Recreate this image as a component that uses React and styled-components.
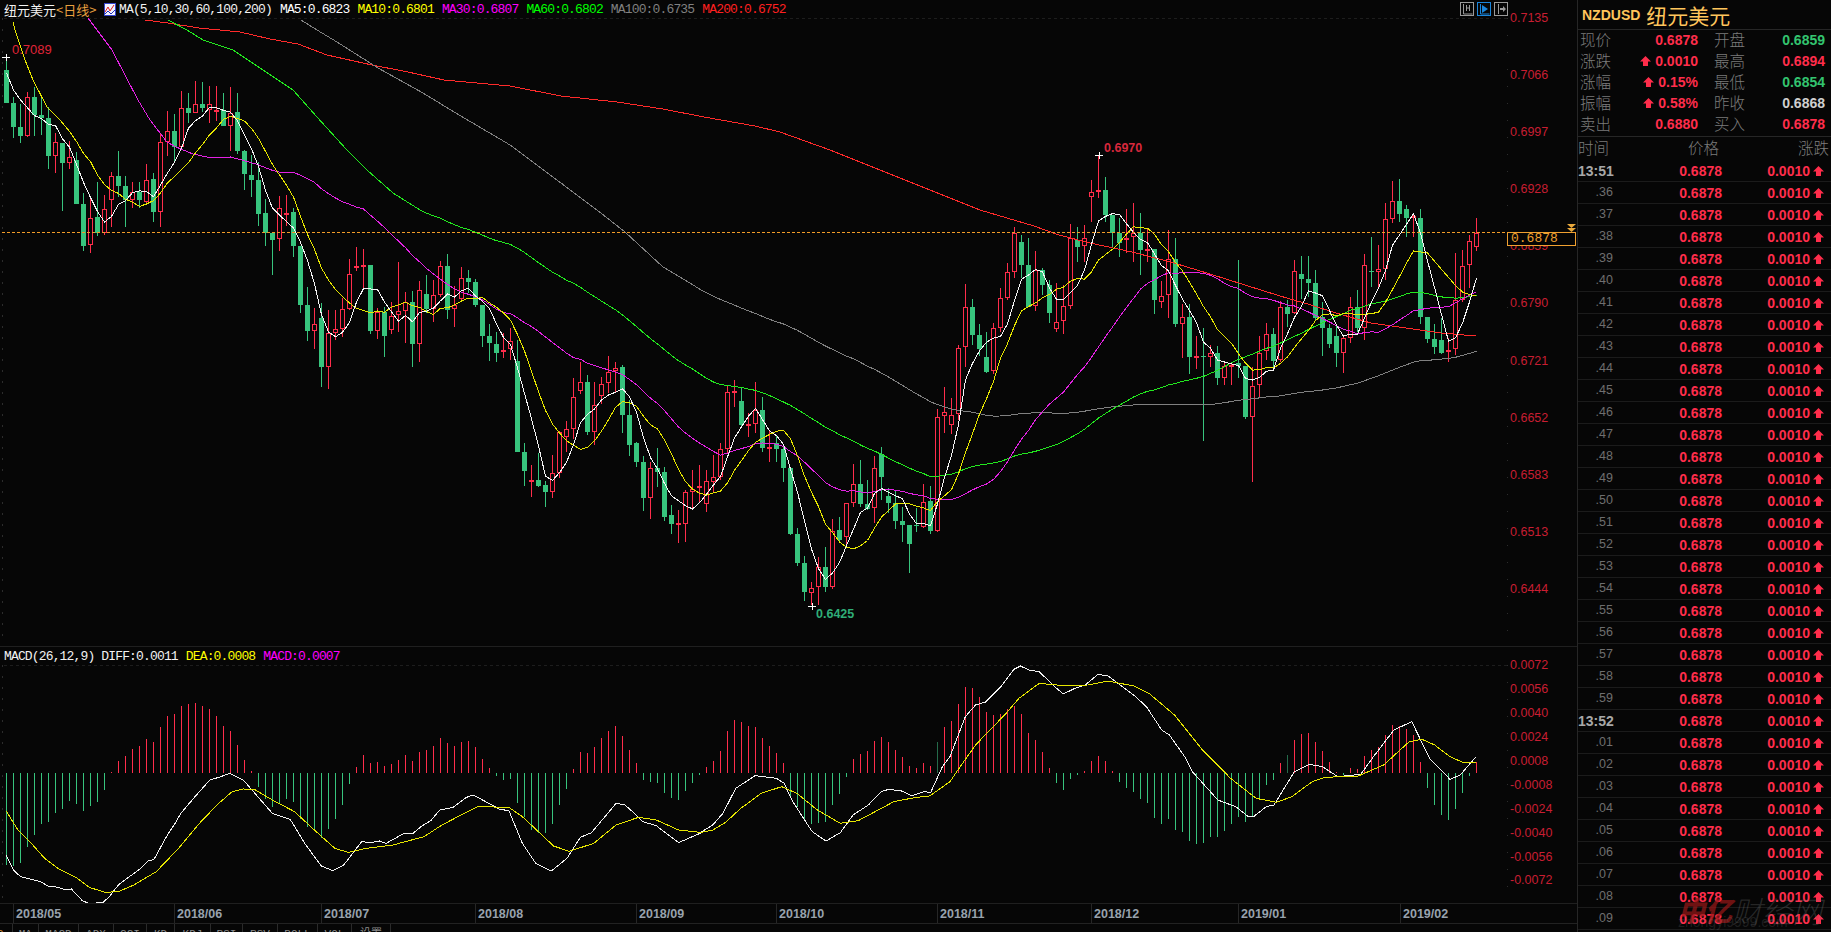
import React from 'react';
import styled, { createGlobalStyle } from 'styled-components';

const BG = '#060606';
const RED = '#ff2d4b';
const GREEN = '#37c47d';
const MONO = '"Liberation Mono", "Noto Sans CJK SC", monospace';
const SANS = '"Liberation Sans", "Noto Sans CJK SC", sans-serif';

// candles read off the chart: [color, bodyTop, bodyBottom, high, low]
// each block has its own y offset, everything is 3x the pixel value
const block1 = [
  ['g',120,218,85,218],['g',219,291,200,323],['g',291,318,222,338],['r',202,318,187,320],['g',201,255,172,318],
  ['g',255,264,200,315],['g',264,378,232,416],['r',337,378,310,428],['g',339,399,339,542],['r',382,398,334,417],
  ['g',390,522,366,522],['g',522,648,490,662],['r',565,646,506,670],['g',561,608,457,618],['r',538,608,495,615],
  ['r',439,509,427,590],['g',439,468,363,500],['g',468,510,437,590],['r',487,510,457,533],['g',485,510,455,533],
  ['r',451,516,403,518],['g',447,545,430,575],['r',337,545,310,590],['r',304,335,243,378],['g',304,350,252,395],
  ['r',235,352,183,360],['g',234,248,190,280],['r',223,248,153,250],['g',223,234,157,245],['r',221,240,168,278],
  ['r',240,244,168,272],['g',240,287,190,288],['r',248,287,172,362],['g',246,362,190,372],['g',363,431,360,480],
  ['g',435,450,375,500],['g',450,551,395,587],['g',549,608,507,648],['g',608,630,608,735],['r',535,628,498,662],
  ['r',548,556,495,587],['g',546,648,535,680],['g',648,825,648,850],['g',825,903,770,932],['r',883,902,835,956],
  ['g',864,1010,818,1070],['r',910,1010,840,1078],['r',898,908,840,930],['r',838,896,805,920],['r',733,836,687,840],
  ['r',709,713,652,722],['r',706,710,657,775],['g',705,903,705,912],['r',845,902,835,927],['g',845,918,830,980],
  ['r',858,899,815,912],['r',844,856,696,905],['r',815,842,785,940],['g',816,941,783,1010],['r',781,941,752,995],
  ['g',792,838,735,850],['r',795,836,750,876],['r',709,795,693,800],['g',708,840,672,868],['r',826,838,768,890],
  ['r',745,808,712,815],['g',744,755,720,790],['g',756,825,748,830],['g',825,918,825,950],['g',918,938,882,992],
  ['g',942,968,905,995],
];
const block2 = [
  ['r',211,217,160,233],['r',184,208,144,240],['g',243,516,180,516],['g',516,573,490,617],['r',601,607,555,650],
  ['g',600,618,518,622],['g',615,636,603,680],['r',580,635,525,653],['r',455,578,452,593],['r',448,470,423,515],
  ['r',352,446,293,478],['r',307,332,245,342],['g',306,456,285,466],['r',375,455,306,495],['r',313,347,292,372],
  ['r',277,310,228,340],['r',263,274,245,335],['g',261,404,255,458],['g',405,495,360,528],['g',489,546,487,560],
  ['g',546,654,528,692],['r',565,653,545,716],['g',564,575,505,620],['g',576,711,560,722],['g',705,732,675,762],
  ['r',730,734,690,788],['r',637,731,630,785],['r',628,635,570,685],['r',619,625,555,670],['r',604,673,570,695],
  ['r',592,606,525,640],['r',508,590,490,600],['r',337,506,315,520],['r',332,335,300,380],['g',363,436,325,440],
  ['r',433,436,400,470],['r',390,431,307,460],['g',390,504,352,515],['r',502,504,450,545],['g',490,507,465,545],
  ['g',507,564,495,605],['g',564,762,564,765],['g',762,850,745,857],['g',850,935,828,962],['r',925,938,905,975],
  ['r',860,922,830,975],['g',861,921,800,935],['r',752,920,717,927],['g',750,780,712,790],['r',670,772,670,800],
  ['r',613,668,552,680],['g',612,672,540,682],['g',672,686,600,690],['r',565,685,528,730],['g',522,590,502,660],
  ['g',648,668,625,700],['g',670,723,630,747],['g',723,735,680,785],['g',736,792,735,878],['g',735,738,683,757],
  ['r',665,740,613,745],['g',664,752,618,762],['r',412,752,388,755],['r',397,409,322,458],
];
const block3 = [
  ['r',855,885,805,912],['r',655,853,645,870],['r',532,652,462,712],['g',532,614,507,645],['g',615,657,583,677],
  ['g',682,725,605,730],['r',595,724,578,732],['r',505,593,475,607],['r',427,503,398,510],['r',310,425,292,445],
  ['g',336,405,315,445],['g',405,530,325,530],['r',420,529,363,543],['g',420,464,415,495],['g',464,549,450,580],
  ['r',577,596,460,605],['r',529,574,465,612],['r',325,527,282,537],['g',330,351,292,395],['r',325,349,285,395],
  ['r',187,200,150,277],['r',181,185,75,205],['g',180,255,140,275],['g',255,308,255,355],['g',308,340,265,382],
  ['r',323,326,237,368],['r',308,322,220,395],['g',308,360,250,435],['r',358,360,295,395],['g',358,510,358,552],
  ['r',497,515,453,535],['r',388,494,300,565],['g',388,582,325,592],['r',562,581,523,683],['g',561,680,522,732],
  ['r',679,685,618,717],['g',678,681,595,932],['r',670,680,645,710],['g',670,744,648,765],['r',708,743,695,765],
  ['r',704,712,695,765],['g',700,708,390,745],['g',708,860,708,866],['r',768,860,710,1055],['r',670,766,617,803],
  ['r',613,664,580,690],['g',613,692,595,712],['r',532,690,512,695],['g',530,552,510,590],['r',423,550,390,552],
  ['g',432,447,378,508],['g',447,458,378,500],['g',459,565,420,570],['g',560,593,515,678],['g',595,642,582,655],
  ['g',618,668,588,710],['r',625,668,620,728],['r',532,623,502,640],['g',530,595,480,605],['r',405,593,372,630],
  ['g',423,426,320,470],['r',418,425,345,470],['r',268,416,220,450],['r',214,266,153,280],['g',213,252,148,275],
  ['g',237,264,225,322],['r',258,262,253,320],['g',264,560,238,582],['g',561,627,560,640],['g',628,650,582,672],
  ['g',630,668,565,672],['r',661,667,625,695],['r',511,658,370,675],['r',408,510,360,515],['r',334,406,315,475],
  ['r',310,352,265,363],
];

const toCandles = (rows, offset) =>
  rows.map(([c, top, bottom, high, low]) => ({
    up: c === 'r',
    top: Math.round(offset + top / 3),
    bottom: Math.round(offset + bottom / 3),
    high: Math.round(offset + high / 3),
    low: Math.round(offset + low / 3),
  }));

const candles = [...toCandles(block1, 30), ...toCandles(block2, 280), ...toCandles(block3, 130)];
const closes = candles.map((c) => (c.up ? c.top : c.bottom));

const column = (i) => 6 + 7 * i;

const movingAverage = (n, head) => {
  const points = [...head];
  for (let i = n - 1; i < closes.length; i++) {
    const slice = closes.slice(i - n + 1, i + 1);
    points.push([column(i) + 0.5, slice.reduce((a, b) => a + b, 0) / n]);
  }
  return points.map((p) => p.join(',')).join(' ');
};

const toLine = (points) => points.map((p) => p.join(',')).join(' ');

// the part of each average that starts before the visible candles
const ma5 = movingAverage(5, [[6.5, 73], [13.5, 90], [20.5, 100]]);
const ma10 = movingAverage(10, [[13, 22], [15, 30], [25, 60], [33, 80], [47, 107], [60, 120]]);
const ma30 = movingAverage(30, [[88, 18], [97, 30], [112, 50], [125, 75], [138, 100], [150, 120], [167, 142], [176, 147], [193, 154]]);
const ma60 = movingAverage(60, [[168, 20], [187, 30], [203, 40], [233, 50], [260, 68], [293, 90], [317, 117], [347, 150], [367, 170], [393, 193]]);
const ma100 = movingAverage(100, [[301, 20], [317, 30], [337, 42], [378, 68], [423, 93], [459, 115], [500, 139], [510, 145], [561, 183], [597, 210], [625, 232], [663, 267], [685, 280]]);
const ma200 = toLine([
  [145, 20], [168, 23], [199, 28], [240, 32], [270, 39], [298, 44], [327, 55], [372, 65], [408, 72], [444, 80], [510, 86],
  [561, 96], [617, 102], [663, 109], [704, 117], [755, 126], [780, 132], [830, 150], [880, 170], [930, 190], [980, 210],
  [1034, 226], [1059, 235], [1090, 243], [1132, 252], [1174, 263], [1210, 274], [1245, 285], [1280, 296], [1311, 305],
  [1336, 313], [1371, 323], [1406, 328], [1441, 333], [1476, 336],
]);

// macd bars, tip of each bar, 3x above the zero line
const tips1 = [
  555,558,548,500,465,432,426,398,386,363,372,392,378,365,330,276,243,228,207,198,177,186,140,108,102,78,72,69,78,87,
  108,138,153,195,240,273,320,357,380,368,357,365,418,440,450,473,447,417,375,312,260,225,249,246,258,251,240,225,243,216,
  210,198,174,189,198,186,183,201,237,264,288,300,297,370,410,450,460,458,432,375,327,266,216,219,201,174,153,138,168,210,
  249,300,306,309,339,354,360,333,309,285,
];
const tips2 = [
  352,334,303,243,210,216,228,232,264,288,309,339,445,470,510,522,520,515,465,432,380,327,312,303,273,261,276,300,321,348,
  354,339,348,277,231,213,162,111,114,141,186,195,192,177,168,192,249,270,306,354,399,420,387,375,363,333,318,333,363,396,
  414,426,447,459,504,522,507,540,546,573,582,579,561,561,543,522,501,516,498,450,405,390,339,315,270,252,249,276,303,336,
  366,376,354,357,318,300,291,255,225,228,237,255,336,414,465,495,510,477,430,378,336,
];
const bars = [
  ...tips1.map((t) => 680 + t / 3),
  ...tips2.map((t) => 650 + t / 3),
].map((y, i) => ({ i, tip: Math.round(y), dim: i === 133 || i === 183 }));

const fromCrop8 = (points) => points.map(([x, y]) => [x / 2.24, 680 + y / 3]);
const fromCrop9 = (points) => points.map(([x, y]) => [700 + x / 1.96, 650 + y / 3]);

const diff = toLine([
  ...fromCrop8([[14,525],[30,570],[46,590],[90,605],[108,618],[130,622],[148,630],[160,627],[185,663],[200,670],[230,668],[245,650],[265,615],[315,565],[332,543],[345,538],[375,465],[390,435],[405,400],[440,345],[470,300],[490,292],[515,280],[545,300],[610,400],[650,418],[685,495],[720,558],[745,572],[770,555],[810,485],[830,488],[850,483],[865,490],[905,460],[925,460],[945,438],[965,422],[985,390],[1015,382],[1045,352],[1060,345],[1120,388],[1140,392],[1170,490],[1200,550],[1235,573],[1270,535],[1300,472],[1325,458],[1380,370],[1400,375],[1425,405],[1440,425],[1470,437],[1520,488],[1568,460]]),
  ...fromCrop9([[0,548],[25,525],[45,490],[70,415],[85,400],[108,377],[150,385],[165,400],[180,450],[205,510],[220,545],[247,573],[275,548],[300,495],[330,465],[355,425],[370,418],[395,423],[415,437],[440,425],[452,428],[475,350],[490,320],[520,200],[540,165],[560,156],[590,110],[615,58],[628,48],[645,60],[665,65],[695,110],[712,132],[735,115],[755,105],[780,73],[800,78],[850,135],[875,170],[905,240],[920,255],[950,320],[965,365],[1015,450],[1050,470],[1075,500],[1085,500],[1110,470],[1125,465],[1165,365],[1195,343],[1220,350],[1250,380],[1295,373],[1320,320],[1360,240],[1395,215],[1430,325],[1470,388],[1490,375],[1520,322]]),
]);
const dea = toLine([
  ...fromCrop8([[14,393],[40,450],[70,490],[100,535],[130,565],[170,592],[200,622],[235,637],[265,635],[300,615],[350,575],[400,505],[450,425],[490,370],[520,335],[545,327],[570,328],[610,360],[660,395],[700,445],[750,505],[780,517],[820,505],[880,495],[950,470],[990,435],[1040,400],[1070,380],[1140,382],[1170,410],[1210,460],[1240,498],[1275,514],[1330,490],[1380,435],[1430,412],[1470,420],[1520,450],[1568,457]]),
  ...fromCrop9([[0,548],[25,540],[50,517],[80,475],[120,430],[160,410],[190,430],[230,480],[275,520],[310,512],[380,455],[420,443],[450,438],[490,395],[510,350],[540,285],[600,190],[625,145],[665,100],[720,108],[760,105],[800,93],[850,108],[880,130],[930,195],[985,300],[1040,385],[1090,445],[1130,457],[1160,440],[1200,395],[1225,382],[1290,378],[1340,345],[1390,275],[1415,268],[1440,285],[1470,320],[1495,337],[1520,338]]),
]);

const priceLabels = ['0.7135', '0.7066', '0.6997', '0.6928', '0.6859', '0.6790', '0.6721', '0.6652', '0.6583', '0.6513', '0.6444'];
const macdLabels = ['0.0072', '0.0056', '0.0040', '0.0024', '0.0008', '-0.0008', '-0.0024', '-0.0040', '-0.0056', '-0.0072'];
const legend = [
  ['MA5:0.6823', '#ffffff'],
  ['MA10:0.6801', '#ffff00'],
  ['MA30:0.6807', '#ff00ff'],
  ['MA60:0.6802', '#00ff00'],
  ['MA100:0.6735', '#808080'],
  ['MA200:0.6752', '#ff2020'],
];
const months = [
  ['2018/05', 161], ['2018/06', 147], ['2018/07', 154], ['2018/08', 161], ['2018/09', 140],
  ['2018/10', 161], ['2018/11', 154], ['2018/12', 147], ['2019/01', 162], ['2019/02', 177],
];
const tabs = [['MA', 26.5], ['MACD', 40], ['ADX', 35], ['CCI', 33], ['KD', 28], ['KDJ', 36], ['RSI', 32], ['RSV', 35], ['BOLL', 40], ['VOL', 34], ['设置', 39]];
const quotes = [
  ['现价', '0.6878', RED, false, '开盘', '0.6859', '#33c46f'],
  ['涨跌', '0.0010', RED, true, '最高', '0.6894', RED],
  ['涨幅', '0.15%', RED, true, '最低', '0.6854', '#33c46f'],
  ['振幅', '0.58%', RED, true, '昨收', '0.6868', '#cfcfcf'],
  ['卖出', '0.6880', RED, false, '买入', '0.6878', RED],
];
const seconds = (from, to) => Array.from({ length: to - from + 1 }, (_, i) => `.${String(from + i).padStart(2, '0')}`);
const ticks = ['13:51', ...seconds(36, 59), '13:52', ...seconds(1, 9)];

const GlobalStyle = createGlobalStyle`
  html, body {
    margin: 0;
    height: 100%;
    background: ${BG};
    overflow: hidden;
  }
`;

const Page = styled.div`
  display: flex;
  width: 1831px;
  height: 932px;
  overflow: hidden;
  background: ${BG};
  font-family: ${SANS};
`;

const ChartColumn = styled.div`
  display: flex;
  flex-direction: column;
  width: 1577px;
  flex-shrink: 0;
`;

const Pane = styled.div`
  position: relative;
  display: flex;
  height: ${({ $height }) => $height}px;
  flex-shrink: 0;
  border-bottom: 1px solid #1f1f1f;
  box-sizing: border-box;
`;

const PlotSvg = styled.svg`
  display: block;
  width: 1508px;
  height: 100%;
  flex-shrink: 0;
`;

const Axis = styled.div`
  position: relative;
  flex: 1;
  display: flex;
  flex-direction: column;
  gap: ${({ $gap }) => $gap}px;
  padding: ${({ $top }) => $top}px 0 0 2px;
`;

const AxisLabel = styled.div`
  height: 14px;
  line-height: 14px;
  font-size: 12.5px;
  color: #c81e32;
`;

const Legend = styled.div`
  position: absolute;
  left: 4px;
  top: ${({ $top }) => $top}px;
  display: flex;
  align-items: center;
  gap: 8px;
  height: 14px;
  white-space: nowrap;
  font-family: ${MONO};
  font-size: 13px;
  letter-spacing: -0.85px;
`;

const LegendItem = styled.span`
  color: ${({ $color }) => $color};
`;

const SymbolTitle = styled.span`
  display: inline-flex;
  align-items: center;
  width: 92px;
  font-family: "Noto Sans CJK SC", sans-serif;
  font-size: 13px;
  letter-spacing: 0;
  color: #f2f2f2;
`;

const Period = styled.span`
  color: #e8a040;
`;

const MaIcon = styled.svg`
  width: 12px;
  height: 13px;
  margin-right: -5px;
  flex-shrink: 0;
`;

const ToolIcons = styled.div`
  position: absolute;
  left: 1460px;
  top: 2px;
  display: flex;
  gap: 3px;
`;

const ToolIcon = styled.svg`
  width: 14px;
  height: 14px;
  color: ${({ $active }) => ($active ? '#1b86dc' : '#9a9a9a')};
`;

const LastPrice = styled.div`
  position: absolute;
  left: -1px;
  top: 232px;
  width: 64px;
  height: 12px;
  line-height: 12px;
  padding-left: 3px;
  border: 1px solid #f0a030;
  background: #050505;
  color: #f0a030;
  font-family: ${MONO};
  font-size: 13px;
`;

const LastMarker = styled.svg`
  position: absolute;
  left: 59px;
  top: 224px;
  width: 9px;
  height: 8px;
`;

const DateBar = styled.div`
  display: flex;
  height: 20px;
  flex-shrink: 0;
  padding-left: 13px;
  border-bottom: 1px solid #222;
  box-sizing: border-box;
`;

const DateCell = styled.div`
  width: ${({ $width }) => $width}px;
  flex-shrink: 0;
  box-sizing: border-box;
  padding-left: 2px;
  border-left: 1px solid #262626;
  font-size: 12.5px;
  font-weight: bold;
  line-height: 20px;
  color: #98a2ad;
`;

const TabBar = styled.div`
  display: flex;
  flex: 1;
  overflow: hidden;
`;

const Tab = styled.div`
  width: ${({ $width }) => $width}px;
  flex-shrink: 0;
  box-sizing: border-box;
  text-align: center;
  border-right: 1px solid #2a2a2a;
  font-family: ${MONO};
  font-size: 11px;
  line-height: 20px;
  color: #8c8c8c;
`;

const LeadTab = styled.div`
  width: 12.5px;
  flex-shrink: 0;
  box-sizing: border-box;
  border-right: 1px solid #2a2a2a;
  overflow: hidden;
  text-indent: -4px;
  font-size: 11px;
  line-height: 20px;
  color: #e8a040;
`;

const SidePanel = styled.div`
  position: relative;
  flex: 1;
  display: flex;
  flex-direction: column;
  border-left: 1px solid #262626;
`;

const SideHeader = styled.div`
  display: flex;
  align-items: center;
  gap: 6px;
  height: 29px;
  padding-left: 4px;
  border-bottom: 1px solid #262626;
  color: #ffc55c;
`;

const SymbolCode = styled.span`
  font-size: 14px;
  font-weight: bold;
`;

const SymbolName = styled.span`
  font-family: "Noto Sans CJK SC", sans-serif;
  font-size: 21px;
  line-height: 28px;
`;

const QuoteBlock = styled.div`
  display: flex;
  flex-direction: column;
  height: 106px;
  border-bottom: 1px solid #262626;
`;

const QuoteRow = styled.div`
  display: grid;
  grid-template-columns: 118px 111px;
  column-gap: 16px;
  height: 21px;
  padding-left: 2px;
`;

const QuoteCell = styled.div`
  display: flex;
  justify-content: space-between;
  align-items: center;
`;

const QuoteLabel = styled.span`
  margin-top: -3px;
  font-family: "Noto Sans CJK SC", sans-serif;
  font-size: 15.5px;
  font-weight: 300;
  color: #7c7c7c;
`;

const QuoteValue = styled.span`
  display: inline-flex;
  align-items: center;
  gap: 4px;
  margin-top: -1px;
  font-size: 14px;
  font-weight: bold;
  color: ${({ $color }) => $color};
`;

const Arrow = styled.svg`
  width: 11px;
  height: 10px;
  flex-shrink: 0;
  fill: ${RED};
`;

const TableHead = styled.div`
  display: flex;
  justify-content: space-between;
  align-items: center;
  height: 23px;
  padding: 0 2px 3px 0;
  box-sizing: border-box;
  font-family: "Noto Sans CJK SC", sans-serif;
  font-size: 15.5px;
  font-weight: 300;
  color: #7c7c7c;
`;

const TickRow = styled.div`
  display: grid;
  grid-template-columns: 35px 109px 88px 14px;
  align-items: center;
  flex-shrink: 0;
  height: 22px;
  box-sizing: border-box;
  padding-top: 1px;
  border-bottom: 1px solid #1b1b1b;
`;

const TickTime = styled.div`
  text-align: right;
  font-size: ${({ $major }) => ($major ? 14 : 12.5)}px;
  font-weight: ${({ $major }) => ($major ? 'bold' : 'normal')};
  color: ${({ $major }) => ($major ? '#a8a8a8' : '#6e6e6e')};
  margin-top: ${({ $major }) => ($major ? 0 : -3)}px;
`;

const TickValue = styled.div`
  text-align: right;
  font-size: 14px;
  font-weight: bold;
  color: ${RED};
`;

const TickArrow = styled.div`
  display: flex;
  justify-content: flex-end;
`;

const Watermark = styled.div`
  position: absolute;
  left: 100px;
  top: 897px;
  display: flex;
  align-items: center;
  font-style: italic;
  font-family: "Noto Sans CJK SC", sans-serif;
  white-space: nowrap;
  pointer-events: none;
`;

const MarkRed = styled.span`
  font-size: 27px;
  line-height: 26px;
  font-weight: 900;
  color: rgba(150, 24, 24, 0.72);
`;

const MarkGray = styled.span`
  font-size: 30px;
  line-height: 26px;
  font-weight: 300;
  color: rgba(120, 120, 120, 0.3);
`;

const MarkUrl = styled.div`
  position: absolute;
  left: 100px;
  top: 914px;
  font-size: 14px;
  color: rgba(120, 120, 120, 0.22);
  white-space: nowrap;
  pointer-events: none;
`;

const UpArrow = () => (
  <Arrow viewBox="0 0 11 10">
    <path d="M5.5 0 L11 5.5 H8 V10 H3 V5.5 H0 Z" />
  </Arrow>
);

const Candle = ({ candle, i }) => {
  const x = column(i);
  const color = candle.up ? RED : GREEN;
  return (
    <g>
      <rect x={x} y={candle.high} width="1" height={Math.max(candle.low - candle.high, 1)} fill={color} />
      {candle.up ? (
        <rect x={x - 1.5} y={candle.top + 0.5} width="4" height={Math.max(candle.bottom - candle.top - 1, 1)} fill={BG} stroke={color} />
      ) : (
        <rect x={x - 2} y={candle.top} width="5" height={Math.max(candle.bottom - candle.top, 1)} fill={color} />
      )}
    </g>
  );
};

const Line = ({ points, color }) => <polyline points={points} fill="none" stroke={color} strokeWidth="1" shapeRendering="crispEdges" />;

const Cross = ({ x, y }) => <path d={`M${x - 4} ${y + 0.5}h8M${x + 0.5} ${y - 3}v7`} stroke="#fff" shapeRendering="crispEdges" />;

const AxisDots = ({ top, bottom }) => (
  <>
    <line x1="1507.5" y1={top} x2="1507.5" y2={bottom} stroke="#2c2c2c" strokeDasharray="1 16" />
    <line x1="2.5" y1={top} x2="2.5" y2={bottom} stroke="#2c2c2c" strokeDasharray="2 9" />
    <line x1="4" y1={top + 0.5} x2="1507" y2={top + 0.5} stroke="#1d1d1d" strokeDasharray="3 3" />
  </>
);

const MainChart = () => (
  <PlotSvg viewBox="0 0 1508 646">
    <AxisDots top={18} bottom={640} />
    {candles.map((c, i) => (
      <Candle key={i} candle={c} i={i} />
    ))}
    <Line points={ma200} color="#ff2a2a" />
    <Line points={ma100} color="#808080" />
    <Line points={ma60} color="#22e81e" />
    <Line points={ma30} color="#e322e3" />
    <Line points={ma10} color="#e6e600" />
    <Line points={ma5} color="#f4f4f4" />
    <line x1="2" y1="232.5" x2="1508" y2="232.5" stroke="#f09a28" strokeDasharray="3 2" />
    <Cross x={6} y={57} />
    <Cross x={1099} y={155} />
    <Cross x={812} y={606} />
    <text x="12" y="54" fontFamily="Liberation Sans" fontSize="13" fill="#e02438">0.7089</text>
    <text x="1104" y="152" fontFamily="Liberation Sans" fontSize="12.5" fontWeight="bold" fill="#d8283c">0.6970</text>
    <text x="816" y="618" fontFamily="Liberation Sans" fontSize="12.5" fontWeight="bold" fill="#2fae78">0.6425</text>
  </PlotSvg>
);

const MacdChart = () => (
  <PlotSvg viewBox="0 647 1508 256">
    <AxisDots top={665} bottom={900} />
    {bars.map(({ i, tip, dim }) => {
      const up = tip < 773;
      const color = dim ? '#256b4a' : up ? RED : GREEN;
      return (
        <rect key={i} x={column(i)} y={up ? tip : 773} width="1" height={Math.abs(tip - 773) || 1} fill={color} shapeRendering="crispEdges" />
      );
    })}
    <Line points={diff} color="#f2f2f2" />
    <Line points={dea} color="#e6e600" />
  </PlotSvg>
);

const App = () => (
  <>
    <GlobalStyle />
    <Page>
      <ChartColumn>
        <Pane $height={647}>
          <MainChart />
          <Axis $gap={43.1} $top={11}>
            {priceLabels.map((label) => (
              <AxisLabel key={label}>{label}</AxisLabel>
            ))}
            <LastMarker viewBox="0 0 9 8">
              <path d="M0 0h9L4.5 4zM0 4h9L4.5 8z" fill="#e8a83c" />
            </LastMarker>
            <LastPrice>0.6878</LastPrice>
          </Axis>
          <Legend $top={2}>
            <SymbolTitle>
              纽元美元<Period>&lt;日线&gt;</Period>
            </SymbolTitle>
            <MaIcon viewBox="0 0 12 13">
              <rect x="0.5" y="0.5" width="11" height="12" fill="#f4f4ff" stroke="#3344cc" />
              <path d="M1 9 L4 4 L6 8 L10 2" fill="none" stroke="#e02020" />
              <path d="M1 11 L4 8 L7 11 L11 7" fill="none" stroke="#2030c0" />
            </MaIcon>
            <LegendItem $color="#f2f2f2">MA(5,10,30,60,100,200)</LegendItem>
            {legend.map(([text, color]) => (
              <LegendItem key={text} $color={color}>{text}</LegendItem>
            ))}
          </Legend>
          <ToolIcons>
            <ToolIcon viewBox="0 0 14 14">
              <rect x="0.5" y="0.5" width="13" height="13" fill="none" stroke="currentColor" />
              <path d="M3.5 2v10h9M6.5 3v6M9.5 3v6M6.5 6h3" fill="none" stroke="currentColor" />
            </ToolIcon>
            <ToolIcon viewBox="0 0 14 14" $active>
              <rect x="0.5" y="0.5" width="13" height="13" fill="none" stroke="currentColor" />
              <path d="M3.5 2v10h9" fill="none" stroke="currentColor" />
              <path d="M5 3l6 4-6 4z" fill="currentColor" />
            </ToolIcon>
            <ToolIcon viewBox="0 0 14 14">
              <rect x="0.5" y="0.5" width="13" height="13" fill="none" stroke="currentColor" />
              <path d="M4.5 2v10" fill="none" stroke="currentColor" />
              <path d="M6 6h3V4l3 3-3 3V8H6z" fill="currentColor" />
            </ToolIcon>
          </ToolIcons>
        </Pane>
        <Pane $height={257}>
          <MacdChart />
          <Axis $gap={9.95} $top={11}>
            {macdLabels.map((label) => (
              <AxisLabel key={label}>{label}</AxisLabel>
            ))}
          </Axis>
          <Legend $top={2}>
            <LegendItem $color="#f2f2f2">MACD(26,12,9) DIFF:0.0011</LegendItem>
            <LegendItem $color="#ffff00">DEA:0.0008</LegendItem>
            <LegendItem $color="#ff00ff">MACD:0.0007</LegendItem>
          </Legend>
        </Pane>
        <DateBar>
          {months.map(([label, width]) => (
            <DateCell key={label} $width={width}>{label}</DateCell>
          ))}
        </DateBar>
        <TabBar>
          <LeadTab>S</LeadTab>
          {tabs.map(([label, width]) => (
            <Tab key={label} $width={width}>{label}</Tab>
          ))}
        </TabBar>
      </ChartColumn>
      <SidePanel>
        <SideHeader>
          <SymbolCode>NZDUSD</SymbolCode>
          <SymbolName>纽元美元</SymbolName>
        </SideHeader>
        <QuoteBlock>
          {quotes.map(([label, value, color, arrow, label2, value2, color2]) => (
            <QuoteRow key={label}>
              <QuoteCell>
                <QuoteLabel>{label}</QuoteLabel>
                <QuoteValue $color={color}>
                  {arrow && <UpArrow />}
                  {value}
                </QuoteValue>
              </QuoteCell>
              <QuoteCell>
                <QuoteLabel>{label2}</QuoteLabel>
                <QuoteValue $color={color2}>{value2}</QuoteValue>
              </QuoteCell>
            </QuoteRow>
          ))}
        </QuoteBlock>
        <TableHead>
          <span>时间</span>
          <span>价格</span>
          <span>涨跌</span>
        </TableHead>
        {ticks.map((time) => (
          <TickRow key={time}>
            <TickTime $major={time.includes(':')}>{time}</TickTime>
            <TickValue>0.6878</TickValue>
            <TickValue>0.0010</TickValue>
            <TickArrow>
              <UpArrow />
            </TickArrow>
          </TickRow>
        ))}
        <Watermark>
          <MarkRed>中亿</MarkRed>
          <MarkGray>财经网</MarkGray>
        </Watermark>
        <MarkUrl>zhongyi9999.com</MarkUrl>
      </SidePanel>
    </Page>
  </>
);

export default App;
